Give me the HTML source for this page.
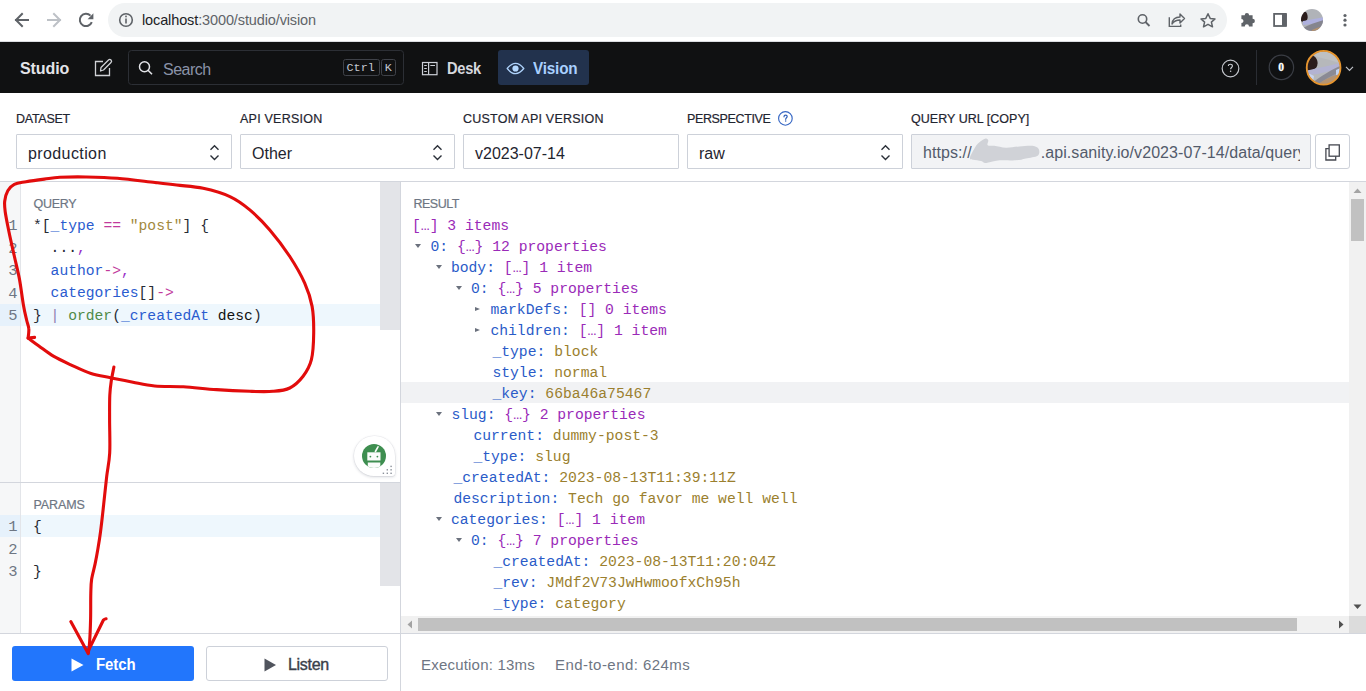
<!DOCTYPE html>
<html><head><meta charset="utf-8">
<style>
*{box-sizing:border-box;margin:0;padding:0}
html,body{width:1366px;height:691px;overflow:hidden;background:#fff;font-family:"Liberation Sans",sans-serif}
.a{position:absolute}
.t{position:absolute;white-space:pre;line-height:1}
.mono{font-family:"Liberation Mono",monospace}
/* chrome */
#chrome{left:0;top:0;width:1366px;height:42px;background:#fff;border-bottom:1px solid #dadce0}
#pill{left:108px;top:3px;width:1119px;height:34px;border-radius:17px;background:#f1f3f4}
/* navbar */
#nav{left:0;top:42px;width:1366px;height:51px;background:#101112}
.sel{position:absolute;top:134px;height:35px;border:1px solid #cdd1d9;border-radius:1px;background:#fff}
.lbl{position:absolute;top:112px;font-size:12.5px;color:#1f2530;letter-spacing:0.3px;font-weight:normal;-webkit-text-stroke:0.2px #1f2530}
.ck{color:#2a5ccf}
.cp{color:#c13a9c}
.cs{color:#a2883c}
.cd{color:#262a33}
.cg{color:#4f8a48}
.cv{color:#9a32c8}
.rk{color:#2a5bc8}
.rv{color:#9b7f2e}
.rs{color:#9a2ab8}
.rl{font-size:14.71px;line-height:21px;height:21px}
.tri{position:absolute;width:0;height:0}
.tri.d{border-left:3px solid transparent;border-right:3px solid transparent;border-top:4.5px solid #6b717d}
.tri.r{border-top:2.7px solid transparent;border-bottom:2.7px solid transparent;border-left:5px solid #6b717d}
</style></head><body>

<!-- Chrome toolbar -->
<div id="chrome" class="a"></div>
<div id="pill" class="a"></div>
<svg class="a" style="left:0;top:0" width="1366" height="42">
  <!-- back -->
  <g fill="none" stroke="#5f6368" stroke-width="2" stroke-linecap="square">
    <path d="M16 20 H28"/><path d="M22 14 L16 20 L22 26"/>
  </g>
  <g fill="none" stroke="#bdc1c6" stroke-width="2" stroke-linecap="square">
    <path d="M48 20 H60"/><path d="M54 14 L60 20 L54 26"/>
  </g>
  <!-- reload -->
  <path d="M91.8 22.1 A6.2 6.2 0 1 1 90.5 15.6" fill="none" stroke="#5f6368" stroke-width="2"/>
  <path d="M87.6 19.2 L93.4 19.2 L93.4 13.2 Z" fill="#5f6368"/>
  <!-- info -->
  <circle cx="126" cy="20" r="6.3" fill="none" stroke="#5f6368" stroke-width="1.6"/>
  <rect x="125.2" y="18.5" width="1.6" height="5" fill="#5f6368"/>
  <rect x="125.2" y="15.6" width="1.6" height="1.7" fill="#5f6368"/>
  <!-- search -->
  <circle cx="1142.5" cy="19" r="4.2" fill="none" stroke="#5f6368" stroke-width="1.6"/>
  <path d="M1145.5 22 L1149.5 26" stroke="#5f6368" stroke-width="1.8"/>
  <!-- share -->
  <path d="M1169.3 17.3 V26.4 H1180.7 V24.6" fill="none" stroke="#5f6368" stroke-width="1.4"/>
  <path d="M1172 24 C1172.5 19 1176 17 1180 17 V14 L1184.5 18.5 L1180 23 V20 C1177 20 1174 21 1172 24 Z" fill="none" stroke="#5f6368" stroke-width="1.4" stroke-linejoin="round"/>
  <!-- star -->
  <path d="M1208 13.8 L1210.2 18.4 L1215 18.9 L1211.4 22.1 L1212.5 26.8 L1208 24.3 L1203.5 26.8 L1204.6 22.1 L1201 18.9 L1205.8 18.4 Z" fill="none" stroke="#5f6368" stroke-width="1.5" stroke-linejoin="round"/>
  <!-- puzzle -->
  <path d="M1241.4 15.3 H1244.7 A2.2 2.2 0 1 1 1249.1 15.3 H1252.6 V18.7 A2.3 2.3 0 1 1 1252.6 23.3 V26.4 H1249 A2.1 2.1 0 1 0 1244.8 26.4 H1241.4 V23.1 A2.1 2.1 0 1 0 1241.4 18.9 Z" fill="#5f6368"/>
  <!-- sidebar -->
  <rect x="1274.1" y="13.9" width="11.8" height="12.1" fill="none" stroke="#5f6368" stroke-width="1.8"/>
  <rect x="1282" y="13.9" width="4.8" height="12.1" fill="#5f6368"/>
  <!-- avatar -->
  <defs><clipPath id="avch"><circle cx="1312" cy="20" r="11"/></clipPath></defs>
  <g clip-path="url(#avch)">
    <rect x="1300" y="8" width="24" height="24" fill="#b0b3b8"/>
    <path d="M1300 11 L1306 12 C1308 15 1308 18 1307 20 C1305 22 1303 22 1300 21 Z" fill="#2a1c1b"/>
    <path d="M1303 21 C1308 20 1314 19 1324 17 L1324 22 C1318 23 1310 24 1303 25 Z" fill="#aeb0de"/>
    <path d="M1303 28 C1309 25 1316 22 1324 20 L1324 32 H1300 Z" fill="#85858f"/>
    <path d="M1312 30 C1316 28 1320 27 1324 26 L1324 32 H1311 Z" fill="#b39170"/>
  </g>
  <!-- kebab -->
  <circle cx="1345" cy="15.5" r="1.6" fill="#5f6368"/>
  <circle cx="1345" cy="20.2" r="1.6" fill="#5f6368"/>
  <circle cx="1345" cy="25" r="1.6" fill="#5f6368"/>
</svg>
<div class="t" style="left:142px;top:12.8px;font-size:14.5px;color:#202124;letter-spacing:-0.12px">localhost<span style="color:#5f6368">:3000/studio/vision</span></div>

<!-- Studio navbar -->
<div id="nav" class="a"></div>
<div class="t" style="left:20px;top:61px;font-size:16px;font-weight:bold;color:#e3e4e8;letter-spacing:-0.1px">Studio</div>
<svg class="a" style="left:0;top:42px" width="1366" height="51">
  <!-- edit icon -->
  <path d="M103 19.5 H95.5 V33.5 H109.5 V26" fill="none" stroke="#d0d2d6" stroke-width="1.3"/>
  <path d="M100.5 29 L101 25.5 L108.5 18 A1.6 1.6 0 0 1 111 20.5 L103.5 28 Z" fill="none" stroke="#d0d2d6" stroke-width="1.3" stroke-linejoin="round"/>
  <!-- search box -->
  <rect x="128.5" y="8.5" width="275" height="34" rx="3" fill="none" stroke="#2c2f35" stroke-width="1"/>
  <circle cx="144.5" cy="24.8" r="5" fill="none" stroke="#e3e4e8" stroke-width="1.5"/>
  <path d="M148 28.3 L152 32.3" stroke="#e3e4e8" stroke-width="1.6"/>
  <rect x="343.5" y="17.5" width="36" height="16" rx="2" fill="none" stroke="#3f4249"/>
  <rect x="381.5" y="17.5" width="14" height="16" rx="2" fill="none" stroke="#3f4249"/>
  <!-- desk icon -->
  <rect x="422.5" y="20.5" width="14.5" height="12.2" fill="none" stroke="#cdd0d8" stroke-width="1.2"/>
  <path d="M428.6 20.5 V32.7" stroke="#cdd0d8" stroke-width="1.2"/>
  <path d="M424.2 23.5 H426.8 M424.2 26.5 H426.8 M424.2 29.5 H426.8 M430.3 23.5 H435" stroke="#cdd0d8" stroke-width="1.1"/>
  <!-- vision active -->
  <rect x="498" y="8" width="91" height="35" rx="3" fill="#22324d"/>
  <path d="M507.2 26.5 Q515.5 16.2 523.8 26.5 Q515.5 36.8 507.2 26.5 Z" fill="none" stroke="#aed2fb" stroke-width="1.3" stroke-linejoin="round"/>
  <circle cx="515.5" cy="26.5" r="3.1" fill="#b4d8ff"/>
  <!-- help -->
  <circle cx="1230.5" cy="26.45" r="8.35" fill="none" stroke="#c4c7cd" stroke-width="1.15"/>
  <path d="M1228.3 24.1 C1228.3 22.9 1229.3 22.3 1230.3 22.3 C1231.5 22.3 1232.4 23 1232.4 24.1 C1232.4 25.4 1230.6 25.6 1230.6 27.2" fill="none" stroke="#cdd0d6" stroke-width="1.1"/>
  <circle cx="1230.6" cy="29.2" r="0.75" fill="#cdd0d6"/>
  <!-- separator -->
  <path d="M1256.5 8 V43" stroke="#2a2d33" stroke-width="1"/>
  <!-- notifications -->
  <circle cx="1281.4" cy="25.4" r="12.2" fill="none" stroke="#3a3d44" stroke-width="1.2"/>
  <!-- avatar -->
  <defs><clipPath id="avc"><circle cx="1323.6" cy="25.7" r="16.3"/></clipPath><clipPath id="avc2"><circle cx="1312" cy="20" r="11"/></clipPath></defs>
  <g clip-path="url(#avc)">
    <rect x="1306" y="8" width="36" height="36" fill="#b6b8bb"/>
    <path d="M1306 8 H1342 V22 C1334 19 1326 17 1318 15 Z" fill="#bec0c2"/>
    <path d="M1305 17 L1310 13 C1314 13 1317 16 1317.5 20 C1318 24 1316 27 1312 28.5 L1305 28.5 Z" fill="#2b1d1c"/>
    <path d="M1306 28.5 C1311 28 1317 26 1323 25 C1330 23.5 1336 22 1342 21 L1342 26 C1334 28 1326 30 1318 32 L1306 33 Z" fill="#b3b3d2"/>
    <path d="M1308 44 C1316 38 1326 30 1342 23 L1342 44 Z" fill="#8a8a94"/>
    <path d="M1316 44 C1324 38 1332 33 1342 29 L1342 34 C1334 38 1328 41 1322 44 Z" fill="#9a9aa4"/>
    <path d="M1305 31 C1308 31 1311 32 1314 34 L1313 40 L1305 40 Z" fill="#c8d4f0"/>
    <path d="M1336 28 C1339 27 1341 26 1342 25 L1342 34 L1336 34 Z" fill="#c0d2f2"/>
    <path d="M1317 43 C1323 38 1330 35 1338 32.5 L1341 37 C1336 40 1330 43 1324 45 Z" fill="#b59472"/>
  </g>
  <circle cx="1323.6" cy="25.7" r="16.9" fill="none" stroke="#e8962e" stroke-width="1.8"/>
  <path d="M1346 24.8 L1349.5 28.3 L1353 24.8" fill="none" stroke="#c0c3c9" stroke-width="1.2"/>
</svg>
<div class="t" style="left:163px;top:62px;font-size:16px;color:#8a93a8;letter-spacing:-0.5px">Search</div>
<div class="t mono" style="left:346.5px;top:62.8px;font-size:11.8px;color:#c4c8d0">Ctrl</div>
<div class="t mono" style="left:384.8px;top:62.8px;font-size:11.8px;color:#c4c8d0">K</div>
<div class="t" style="left:447px;top:60.6px;font-size:16px;font-weight:bold;color:#d6d8de;letter-spacing:-0.3px;transform:scaleX(0.915);transform-origin:0 0">Desk</div>
<div class="t" style="left:533px;top:60.6px;font-size:16px;font-weight:bold;color:#a9d0ff;letter-spacing:-0.2px;transform:scaleX(0.955);transform-origin:0 0">Vision</div>

<div class="t" style="left:1278.2px;top:62.3px;font-size:11.5px;font-weight:bold;font-family:'Liberation Serif',serif;color:#fff;-webkit-text-stroke:0.3px #fff">0</div>

<!-- Form row -->
<div class="lbl" style="left:16px;letter-spacing:-0.27px">DATASET</div>
<div class="lbl" style="left:240px;letter-spacing:0.23px">API VERSION</div>
<div class="lbl" style="left:463px;letter-spacing:0.23px">CUSTOM API VERSION</div>
<div class="lbl" style="left:687px;letter-spacing:-0.37px">PERSPECTIVE</div>
<div class="lbl" style="left:911px;letter-spacing:0.03px">QUERY URL [COPY]</div>
<svg class="a" style="left:777px;top:110px" width="17" height="17">
  <circle cx="8.4" cy="8.4" r="6.8" fill="none" stroke="#3566c4" stroke-width="1.15"/>
  <path d="M7 6.8 C7 5.6 7.8 5.1 8.6 5.1 C9.5 5.1 10.2 5.7 10.2 6.5 C10.2 7.7 8.7 7.8 8.7 9.3" fill="none" stroke="#2f5fb8" stroke-width="1.2" stroke-linecap="round"/>
  <circle cx="8.7" cy="11.1" r="0.75" fill="#2f5fb8"/>
</svg>
<div class="sel" style="left:16px;width:216px"></div>
<div class="sel" style="left:240px;width:215px"></div>
<div class="sel" style="left:463px;width:216px"></div>
<div class="sel" style="left:687px;width:216px"></div>
<div class="sel" style="left:911px;width:400px;background:#f2f3f5"></div>
<div class="sel" style="left:1315px;width:35px;border-radius:3px"></div>
<div class="t" style="left:28px;top:145.5px;font-size:16px;color:#1f2530;letter-spacing:0.4px">production</div>
<div class="t" style="left:252px;top:145.5px;font-size:16px;color:#1f2530">Other</div>
<div class="t" style="left:475px;top:145.5px;font-size:16px;color:#1f2530">v2023-07-14</div>
<div class="t" style="left:699px;top:145.5px;font-size:16px;color:#1f2530">raw</div>
<div class="a" style="left:923px;top:134px;width:377px;height:35px;overflow:hidden"><div class="t" style="left:0;top:10.7px;font-size:16px;color:#535b6b;letter-spacing:0.08px">https://<span style="display:inline-block;width:69px"></span>.api.sanity.io/v2023-07-14/data/query/production</div></div>
<svg class="a" style="left:0;top:0" width="1366" height="180"><path d="M969.9 157.7 C970.2 155.6 973.7 149.7 975.2 147.2 C976.7 144.7 977.4 143.9 979.1 142.5 C980.9 141.1 984.2 138.9 985.7 138.6 C987.2 138.3 988.0 139.5 988.3 140.6 C988.6 141.7 986.7 144.3 987.7 145.2 C988.7 146.1 991.2 145.4 994.3 145.8 C997.4 146.2 1001.9 147.7 1006.1 147.8 C1010.3 147.9 1014.9 146.8 1019.3 146.5 C1023.7 146.2 1029.3 145.4 1032.5 145.8 C1035.7 146.2 1037.8 147.4 1038.7 149.1 C1039.6 150.8 1039.8 154.1 1037.7 155.7 C1035.6 157.2 1029.5 157.6 1025.9 158.4 C1022.3 159.2 1020.4 160.0 1016.0 160.3 C1011.6 160.6 1003.9 160.0 999.5 160.3 C995.1 160.6 992.0 161.9 989.6 162.3 C987.2 162.8 986.4 163.2 985.0 163.0 C983.6 162.8 983.1 161.6 981.1 161.0 C979.1 160.4 975.1 160.2 973.2 159.7 C971.3 159.1 969.6 159.8 969.9 157.7 Z" fill="#d0d2d7"/></svg>
<svg class="a" style="left:0;top:0" width="1366" height="180">
  <path d="M210.5 149.8 L214.5 145.8 L218.5 149.8 M210.5 155.6 L214.5 159.6 L218.5 155.6" fill="none" stroke="#2a2f38" stroke-width="1.4"/>
  <path d="M433.5 149.8 L437.5 145.8 L441.5 149.8 M433.5 155.6 L437.5 159.6 L441.5 155.6" fill="none" stroke="#2a2f38" stroke-width="1.4"/>
  <path d="M881.5 149.8 L885.5 145.8 L889.5 149.8 M881.5 155.6 L885.5 159.6 L889.5 155.6" fill="none" stroke="#2a2f38" stroke-width="1.4"/>
  <!-- copy icon -->
  <rect x="1329.1" y="144.9" width="10.2" height="11.3" fill="none" stroke="#454850" stroke-width="1.3"/>
  <path d="M1328.9 148.7 H1325.9 V160 H1335.7 V156.3" fill="none" stroke="#454850" stroke-width="1.3"/>
</svg>

<!-- Panels -->
<div class="a" style="left:0;top:181px;width:1366px;height:1px;background:#d3d6dd"></div>
<div class="a" style="left:400px;top:182px;width:1px;height:509px;background:#d3d6dd"></div>
<!-- left gutter -->
<div class="a" style="left:0;top:182px;width:21px;height:451px;background:#f6f7f8;border-right:1px solid #e3e5e9"></div>
<!-- query highlight -->
<div class="a" style="left:0;top:304px;width:20px;height:22px;background:#e6f1fb"></div>
<div class="a" style="left:21px;top:304px;width:359px;height:22px;background:#eef7fd"></div>
<div class="a" style="left:380px;top:182px;width:20px;height:148px;background:#e3e4e8"></div>
<div class="t" style="left:33.5px;top:198px;font-size:12.5px;color:#6e7683;letter-spacing:-0.3px;-webkit-text-stroke:0.2px #6e7683">QUERY</div>
<div class="t mono" style="left:7.5px;top:215.3px;font-size:15.5px;line-height:22.5px;color:#6e7683;text-align:right;width:10px">1
2
3
4
5</div>
<div class="t mono" style="left:33px;top:214.5px;font-size:14.67px;line-height:22.5px;color:#262a33"><span class="cd">*[</span><span class="ck">_type</span> <span class="cp">==</span> <span class="cs">"post"</span><span class="cd">]</span> <span class="cd">{</span>
  <span class="cd">...</span><span class="cv">,</span>
  <span class="ck">author</span><span class="cp">-&gt;</span><span class="cv">,</span>
  <span class="ck">categories</span><span class="cd">[]</span><span class="cp">-&gt;</span>
<span class="cd">}</span> <span style="color:#8f7fb0">|</span> <span class="cg">order</span><span class="cd">(</span><span class="ck">_createdAt</span> <span style="color:#111">desc</span><span class="cd">)</span></div>

<!-- bot icon -->
<div class="a" style="left:354px;top:435.5px;width:40.5px;height:40.5px;border-radius:20.25px 20.25px 3px 20.25px;background:#fff;box-shadow:0 1px 3px rgba(60,70,90,0.22),0 0 0 0.5px rgba(60,70,90,0.08)"></div>
<svg class="a" style="left:354px;top:435.5px" width="41" height="41">
  <defs><clipPath id="botc"><circle cx="20" cy="20" r="12"/></clipPath></defs>
  <circle cx="20" cy="20" r="12" fill="#3e8e50"/>
  <g clip-path="url(#botc)">
    <rect x="13.3" y="16.3" width="13.2" height="8.2" fill="#fbfcfb"/>
    <rect x="13.8" y="26.5" width="12.5" height="6" fill="#fbfcfb"/>
  </g>
  <circle cx="16.4" cy="20.6" r="0.9" fill="#3e8e50"/>
  <circle cx="23.4" cy="20.6" r="0.9" fill="#3e8e50"/>
  <path d="M21.4 15.5 L24 10.8" stroke="#fbfcfb" stroke-width="1.6" stroke-linecap="round"/>
  <g fill="#8a9099"><rect x="36.4" y="29.7" width="1.4" height="1.4"/><rect x="32.6" y="33.1" width="1.4" height="1.4"/><rect x="36.4" y="33.1" width="1.4" height="1.4"/><rect x="28.7" y="36.6" width="1.4" height="1.4"/><rect x="32.6" y="36.6" width="1.4" height="1.4"/><rect x="36.4" y="36.6" width="1.4" height="1.4"/></g>
</svg>

<!-- params -->
<div class="a" style="left:0;top:482px;width:400px;height:1px;background:#d3d6dd"></div>
<div class="a" style="left:380px;top:483px;width:20px;height:103px;background:#e3e4e8"></div>
<div class="a" style="left:0;top:515px;width:20px;height:22px;background:#e6f1fb"></div>
<div class="a" style="left:21px;top:515px;width:359px;height:22px;background:#eef7fd"></div>
<div class="t" style="left:33.5px;top:499px;font-size:12.5px;color:#6e7683;letter-spacing:-0.1px;-webkit-text-stroke:0.2px #6e7683">PARAMS</div>
<div class="t mono" style="left:7.5px;top:516px;font-size:15.5px;line-height:22.6px;color:#6e7683;text-align:right;width:10px">1
2
3</div>
<div class="t mono" style="left:33px;top:515.8px;font-size:14.67px;line-height:22.6px;color:#262a33">{

}</div>

<!-- bottom buttons -->
<div class="a" style="left:0;top:633px;width:400px;height:1px;background:#d3d6dd"></div>
<div class="a" style="left:12px;top:646px;width:182px;height:35px;border-radius:3px;background:#2276fc"></div>
<svg class="a" style="left:71px;top:657.5px" width="14" height="15"><path d="M0.5 0.5 L12.5 7 L0.5 13.5Z" fill="#fff"/></svg>
<div class="t" style="left:95.5px;top:656.8px;font-size:16px;font-weight:bold;color:#fff;letter-spacing:-0.1px;transform:scaleX(0.935);transform-origin:0 0">Fetch</div>
<div class="a" style="left:206px;top:646px;width:182px;height:35px;border-radius:3px;background:#fff;border:1px solid #cdd1d9"></div>
<svg class="a" style="left:263.5px;top:657.5px" width="14" height="15"><path d="M0.5 0.5 L12 7 L0.5 13.5Z" fill="#50545d"/></svg>
<div class="t" style="left:288px;top:656.8px;font-size:16px;color:#3a3f4a;letter-spacing:-0.3px;-webkit-text-stroke:0.4px #3a3f4a">Listen</div>

<!-- Result panel -->
<div class="t" style="left:413.5px;top:198px;font-size:12.5px;color:#6e7683;letter-spacing:-0.5px;-webkit-text-stroke:0.2px #6e7683">RESULT</div>
<div class="a" style="left:401px;top:382px;width:948px;height:21px;background:#f1f2f4"></div>
<!--TREE-->
<div class="t mono rl" style="left:412.0px;top:215.5px"><span class="rs">[…] 3 items</span></div>
<div class="tri d" style="left:415.4px;top:244px"></div>
<div class="t mono rl" style="left:430.4px;top:236.5px"><span class="rk">0:</span> <span class="rs">{…} 12 properties</span></div>
<div class="tri d" style="left:435.9px;top:265px"></div>
<div class="t mono rl" style="left:450.9px;top:257.5px"><span class="rk">body:</span> <span class="rs">[…] 1 item</span></div>
<div class="tri d" style="left:455.9px;top:286px"></div>
<div class="t mono rl" style="left:470.9px;top:278.5px"><span class="rk">0:</span> <span class="rs">{…} 5 properties</span></div>
<div class="tri r" style="left:474.8px;top:307px"></div>
<div class="t mono rl" style="left:490.4px;top:299.5px"><span class="rk">markDefs:</span> <span class="rs">[] 0 items</span></div>
<div class="tri r" style="left:474.8px;top:328px"></div>
<div class="t mono rl" style="left:490.4px;top:320.5px"><span class="rk">children:</span> <span class="rs">[…] 1 item</span></div>
<div class="t mono rl" style="left:492.4px;top:341.5px"><span class="rk">_type:</span> <span class="rv">block</span></div>
<div class="t mono rl" style="left:492.4px;top:362.5px"><span class="rk">style:</span> <span class="rv">normal</span></div>
<div class="t mono rl" style="left:492.4px;top:383.5px"><span class="rk">_key:</span> <span class="rv">66ba46a75467</span></div>
<div class="tri d" style="left:436.4px;top:412px"></div>
<div class="t mono rl" style="left:451.4px;top:404.5px"><span class="rk">slug:</span> <span class="rs">{…} 2 properties</span></div>
<div class="t mono rl" style="left:473.4px;top:425.5px"><span class="rk">current:</span> <span class="rv">dummy-post-3</span></div>
<div class="t mono rl" style="left:473.4px;top:446.5px"><span class="rk">_type:</span> <span class="rv">slug</span></div>
<div class="t mono rl" style="left:453.4px;top:467.5px"><span class="rk">_createdAt:</span> <span class="rv">2023-08-13T11:39:11Z</span></div>
<div class="t mono rl" style="left:453.4px;top:488.5px"><span class="rk">description:</span> <span class="rv">Tech go favor me well well</span></div>
<div class="tri d" style="left:435.9px;top:517px"></div>
<div class="t mono rl" style="left:450.9px;top:509.5px"><span class="rk">categories:</span> <span class="rs">[…] 1 item</span></div>
<div class="tri d" style="left:455.9px;top:538px"></div>
<div class="t mono rl" style="left:470.9px;top:530.5px"><span class="rk">0:</span> <span class="rs">{…} 7 properties</span></div>
<div class="t mono rl" style="left:493.4px;top:551.5px"><span class="rk">_createdAt:</span> <span class="rv">2023-08-13T11:20:04Z</span></div>
<div class="t mono rl" style="left:493.4px;top:572.5px"><span class="rk">_rev:</span> <span class="rv">JMdf2V73JwHwmoofxCh95h</span></div>
<div class="t mono rl" style="left:493.4px;top:593.5px"><span class="rk">_type:</span> <span class="rv">category</span></div>
<!--/TREE-->

<!-- scrollbars -->
<div class="a" style="left:1349px;top:182px;width:17px;height:434px;background:#f1f1f1"></div>
<div class="a" style="left:1351px;top:199px;width:13px;height:42px;background:#c1c1c1"></div>
<svg class="a" style="left:1349px;top:182px" width="17" height="434">
  <path d="M4.5 11 L8.5 6.5 L12.5 11Z" fill="#a3a3a3"/>
  <path d="M4.5 422.5 L8.5 427 L12.5 422.5Z" fill="#505050"/>
</svg>
<div class="a" style="left:401px;top:616px;width:948px;height:17px;background:#f1f1f1"></div>
<div class="a" style="left:418px;top:618px;width:879px;height:13px;background:#c1c1c1"></div>
<div class="a" style="left:1349px;top:616px;width:17px;height:17px;background:#dcdcdc"></div>
<svg class="a" style="left:401px;top:616px" width="948" height="17">
  <path d="M11 4.5 L6.5 8.5 L11 12.5Z" fill="#a3a3a3"/>
  <path d="M938 4.5 L942.5 8.5 L938 12.5Z" fill="#505050"/>
</svg>
<div class="a" style="left:401px;top:633px;width:965px;height:1px;background:#d3d6dd"></div>
<div class="t" style="left:421px;top:657px;font-size:15px;color:#6e7683;letter-spacing:0.2px">Execution: 13ms</div>
<div class="t" style="left:555px;top:657px;font-size:15px;color:#6e7683;letter-spacing:0.45px">End-to-end: 624ms</div>

<!-- Red annotation -->
<svg class="a" style="left:0;top:0;pointer-events:none" width="1366" height="691">
  <g fill="none" stroke="#e20c0c" stroke-width="3.1" stroke-linecap="round" stroke-linejoin="round">
    <path d="M34.6 337.4 L28.1 338.1"/>
    <path d="M28.1 338.1 C28.2 336.5 29.1 331.7 28.8 328.7 C28.6 325.7 27.5 323.9 26.6 320.0 C25.7 316.1 24.7 312.3 23.5 305.5 C22.3 298.7 21.0 287.6 19.5 279.4 C18.0 271.1 16.0 263.8 14.3 256.0 C12.6 248.2 10.6 239.9 9.1 232.5 C7.6 225.1 5.9 216.9 5.2 211.7 C4.5 206.5 4.3 204.8 4.7 201.3 C5.1 197.8 6.2 193.6 7.8 190.8 C9.4 188.0 11.2 185.8 14.3 184.3 C17.4 182.8 21.1 182.6 26.1 181.7 C31.1 180.8 38.7 179.8 44.3 179.1 C49.9 178.4 52.9 177.7 59.9 177.3 C66.8 177.0 76.4 176.8 86.0 177.0 C95.6 177.2 105.8 177.4 117.3 178.3 C128.8 179.2 145.1 181.4 155.0 182.5 C164.9 183.6 168.6 184.0 176.6 185.0 C184.6 186.0 194.3 186.4 203.2 188.3 C212.1 190.2 222.1 193.0 229.9 196.6 C237.7 200.2 243.2 204.3 249.8 209.9 C256.4 215.5 263.1 222.1 269.8 229.9 C276.5 237.7 284.0 247.6 289.8 256.5 C295.6 265.4 301.0 274.8 304.7 283.1 C308.4 291.4 310.6 298.1 312.1 306.4 C313.6 314.7 313.8 324.2 313.7 333.1 C313.6 342.0 313.2 352.5 311.4 359.7 C309.6 366.9 306.7 371.6 303.1 376.3 C299.5 381.0 294.8 385.5 289.8 388.0 C284.8 390.5 279.8 390.8 273.1 391.3 C266.4 391.9 259.2 391.6 249.8 391.3 C240.4 391.0 227.7 390.4 216.6 389.6 C205.5 388.9 193.6 387.4 183.3 386.8 C173.0 386.2 163.1 386.8 154.7 386.0 C146.3 385.2 140.2 383.6 133.0 382.2 C125.8 380.8 118.3 379.3 111.3 377.9 C104.3 376.4 97.8 375.7 91.0 373.5 C84.2 371.3 77.1 367.7 70.8 364.8 C64.5 361.9 58.7 359.3 53.4 356.2 C48.1 353.1 43.1 349.0 38.9 346.0 C34.7 343.0 29.9 339.4 28.1 338.1"/>
    <path d="M113.9 367.0 C113.5 369.3 112.0 376.1 111.3 380.8 C110.6 385.5 110.1 388.7 109.8 395.2 C109.5 401.7 109.6 410.4 109.6 420.0 C109.6 429.6 110.2 443.6 109.7 453.0 C109.2 462.4 107.7 467.9 106.7 476.4 C105.7 484.9 104.7 494.9 103.7 504.2 C102.7 513.5 101.5 524.4 100.5 532.0 C99.5 539.6 98.6 544.7 97.7 550.0 C96.8 555.3 96.1 559.0 95.1 563.9 C94.1 568.8 92.3 574.6 91.6 579.5 C90.9 584.4 91.0 586.9 90.8 593.4 C90.6 599.9 90.8 610.6 90.6 618.8 C90.4 626.9 90.0 636.6 89.6 642.3 C89.2 648.0 88.5 651.2 88.3 653.0"/>
    <path d="M70.8 621.6 L88.2 653.6"/>
    <path d="M106.1 618.8 C105 619 104 619.5 103.3 620.2 L88.2 651"/>
  </g>
</svg>
</body></html>
